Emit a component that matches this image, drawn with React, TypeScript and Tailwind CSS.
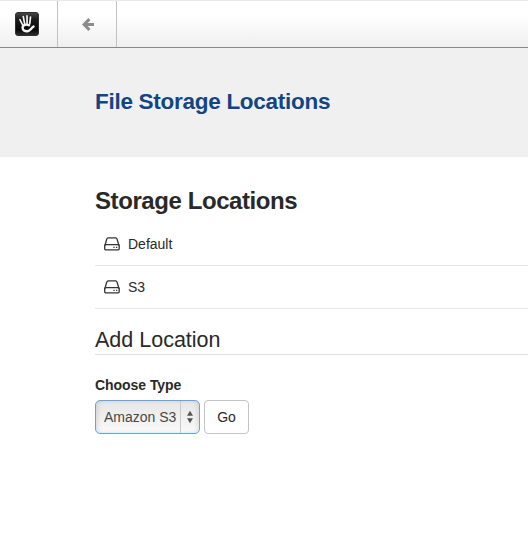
import React from 'react';

function HandLogo() {
  return (
    <svg width="24" height="24" viewBox="0 0 24 24" className="block">
      <defs>
        <linearGradient id="tile" x1="0" y1="0" x2="0" y2="1">
          <stop offset="0" stopColor="#484848" />
          <stop offset="0.3" stopColor="#1c1c1c" />
          <stop offset="0.75" stopColor="#080808" />
          <stop offset="1" stopColor="#303030" />
        </linearGradient>
      </defs>
      <rect x="0.5" y="0.5" width="23" height="23" rx="2.5" fill="url(#tile)" stroke="#303030" />
      <g fill="none" stroke="#f4f4f4" strokeLinecap="round">
        <path d="M4.9 7.6 L7.6 12.8" strokeWidth="1.6" />
        <path d="M8.3 4.6 L9.6 11.6" strokeWidth="1.7" />
        <path d="M12 3.9 L12.1 11.4" strokeWidth="1.7" />
        <path d="M15.5 5 L14.7 11.8" strokeWidth="1.7" />
        <path d="M14 13.3 C11.5 12 7.6 12.6 7.6 15.7 C7.6 18.6 10.2 19.5 12.6 19.2 C15.4 18.8 15.8 16.4 18.6 14.6" strokeWidth="2.4" />
      </g>
    </svg>
  );
}

function BackArrow() {
  return (
    <svg width="12" height="13" viewBox="0 0 12 13" className="block" fill="none" stroke="#8c8c8c" strokeWidth="3">
      <path d="M7.4 1.1 L2.1 6.5 L7.4 11.9 M2.4 6.5 H12" />
    </svg>
  );
}

function DriveIcon() {
  return (
    <svg width="16" height="14" viewBox="0 0 16 14" className="block shrink-0" fill="none" stroke="#333" strokeWidth="1.3">
      <path d="M0.8 8.9 L2.8 2 Q3.1 0.8 4.1 0.8 H11.7 Q12.7 0.8 13 2 L15.1 8.9" />
      <rect x="0.7" y="7.6" width="14.5" height="5.3" rx="1.1" />
      <path d="M9.3 10.4 h1.3 M12 10.4 h1.3" strokeWidth="1.4" />
    </svg>
  );
}

function LocationRow({ name }: { name: string }) {
  return (
    <li className="flex h-[43px] items-center border-b border-[#e7e7e7] pl-[9px]">
      <DriveIcon />
      <span className="ml-2 text-[14px] leading-5">{name}</span>
    </li>
  );
}

export default function App() {
  return (
    <div className="h-[541px] w-full overflow-hidden bg-white font-['Liberation_Sans',Arial,sans-serif] text-[#292929]">
      <header className="flex h-12 border-t border-b border-t-[#e9e9e9] border-b-[#888] bg-linear-to-b from-white from-30% to-[#efefef]">
        <div className="flex w-[58px] justify-end border-r border-[#c2c2c2] pt-[11px] pr-[18px]">
          <HandLogo />
        </div>
        <button className="flex w-[59px] justify-center border-r border-[#c2c2c2] pt-[17px] pl-[2px]" aria-label="Back">
          <BackArrow />
        </button>
      </header>
      <div className="h-[109px] bg-[#f0f0f0] pt-[39px] pl-[95px]">
        <h1 className="text-[22.5px] leading-[30px] font-bold tracking-[-0.28px] whitespace-nowrap text-[#124584]">File Storage Locations</h1>
      </div>
      <main className="pt-[29px] pl-[95px]">
        <h2 className="text-[24px] leading-[30px] font-bold tracking-[-0.42px]">Storage Locations</h2>
        <ul className="mt-[7px]">
          <LocationRow name="Default" />
          <LocationRow name="S3" />
        </ul>
        <h3 className="mt-[16px] h-[30px] border-b border-[#dedede] text-[21.5px] leading-[30px]">Add Location</h3>
        <label className="mt-5 block text-[14px] leading-5 font-bold tracking-[-0.05px]">Choose Type</label>
        <div className="mt-[5px] flex gap-1">
          <button className="flex h-[34px] w-[105px] items-stretch rounded-[5px] border border-[#5aa7ee] bg-linear-to-b from-[#e6e6e6] to-[#fafafa] text-[14px] text-[#484848] shadow-[inset_3px_0_4px_-1px_rgba(0,0,0,0.1),inset_-3px_0_4px_-1px_rgba(0,0,0,0.08)]">
            <span className="flex w-[85px] items-center border-r border-[#c9c9c9] pl-2 whitespace-nowrap">Amazon S3</span>
            <span className="flex flex-1 items-center justify-center">
              <svg width="8" height="14" viewBox="0 0 8 14" fill="#555">
                <path d="M4 0.8 L7 5.8 H1 Z M4 13.2 L7 8.2 H1 Z" />
              </svg>
            </span>
          </button>
          <button className="h-[34px] w-[45px] rounded-[4px] border border-[#c4c4c4] bg-white text-[14px]">Go</button>
        </div>
      </main>
    </div>
  );
}
